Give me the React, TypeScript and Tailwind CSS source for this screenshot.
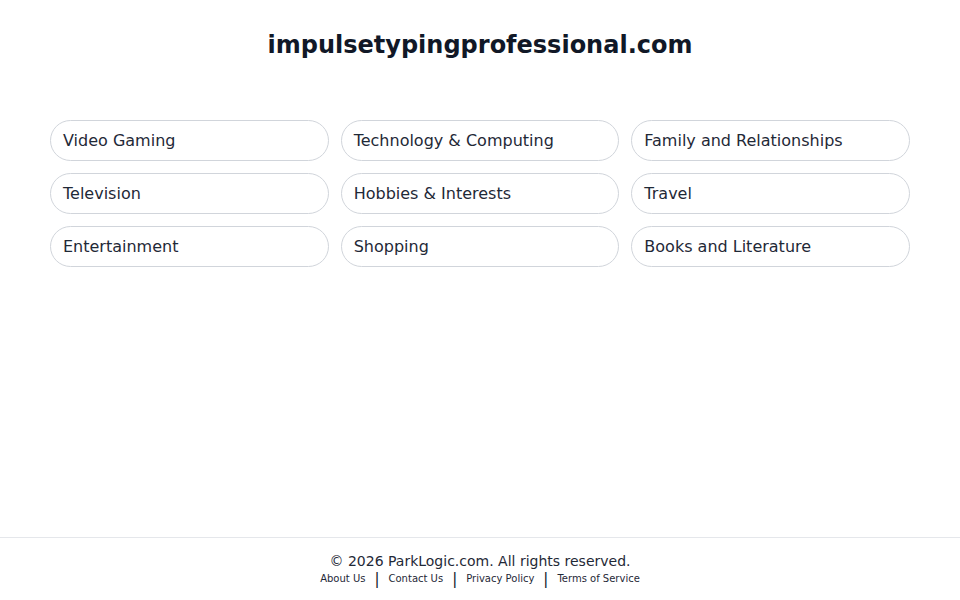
import React from "react";

const items = [
  "Video Gaming",
  "Technology & Computing",
  "Family and Relationships",
  "Television",
  "Hobbies & Interests",
  "Travel",
  "Entertainment",
  "Shopping",
  "Books and Literature",
];

const links = ["About Us", "Contact Us", "Privacy Policy", "Terms of Service"];

export default function App() {
  return (
    <div
      className="min-h-screen flex flex-col bg-white text-[#1f2937]"
      style={{ fontFamily: '"DejaVu Sans", sans-serif' }}
    >
      <main className="flex-1">
        <h1 className="pt-[29px] text-center text-[24px] leading-[32px] font-bold text-[#111827]">
          impulsetypingprofessional.com
        </h1>
        <div className="mx-[50px] mt-[59px] grid grid-cols-3 gap-x-[12px] gap-y-[12px]">
          {items.map((t) => (
            <div
              key={t}
              className="h-[41px] flex items-center rounded-full border border-[#d1d5db] px-[12px] text-[16px] text-[#1f2937]"
            >
              {t}
            </div>
          ))}
        </div>
      </main>
      <footer className="border-t border-[#e5e7eb] pt-[13px] pb-[14px] text-center">
        <div className="text-[14px] leading-[20px] text-[#1f2937]">
          © 2026 ParkLogic.com. All rights reserved.
        </div>
        <div className="mt-[1px] flex justify-center items-center text-[10px] leading-[14px] text-[#1f2937]">
          {links.map((l, i) => (
            <React.Fragment key={l}>
              {i > 0 && <span className="mx-[9px] text-[15px] leading-[14px] text-[#111827]">|</span>}
              <span>{l}</span>
            </React.Fragment>
          ))}
        </div>
      </footer>
    </div>
  );
}
